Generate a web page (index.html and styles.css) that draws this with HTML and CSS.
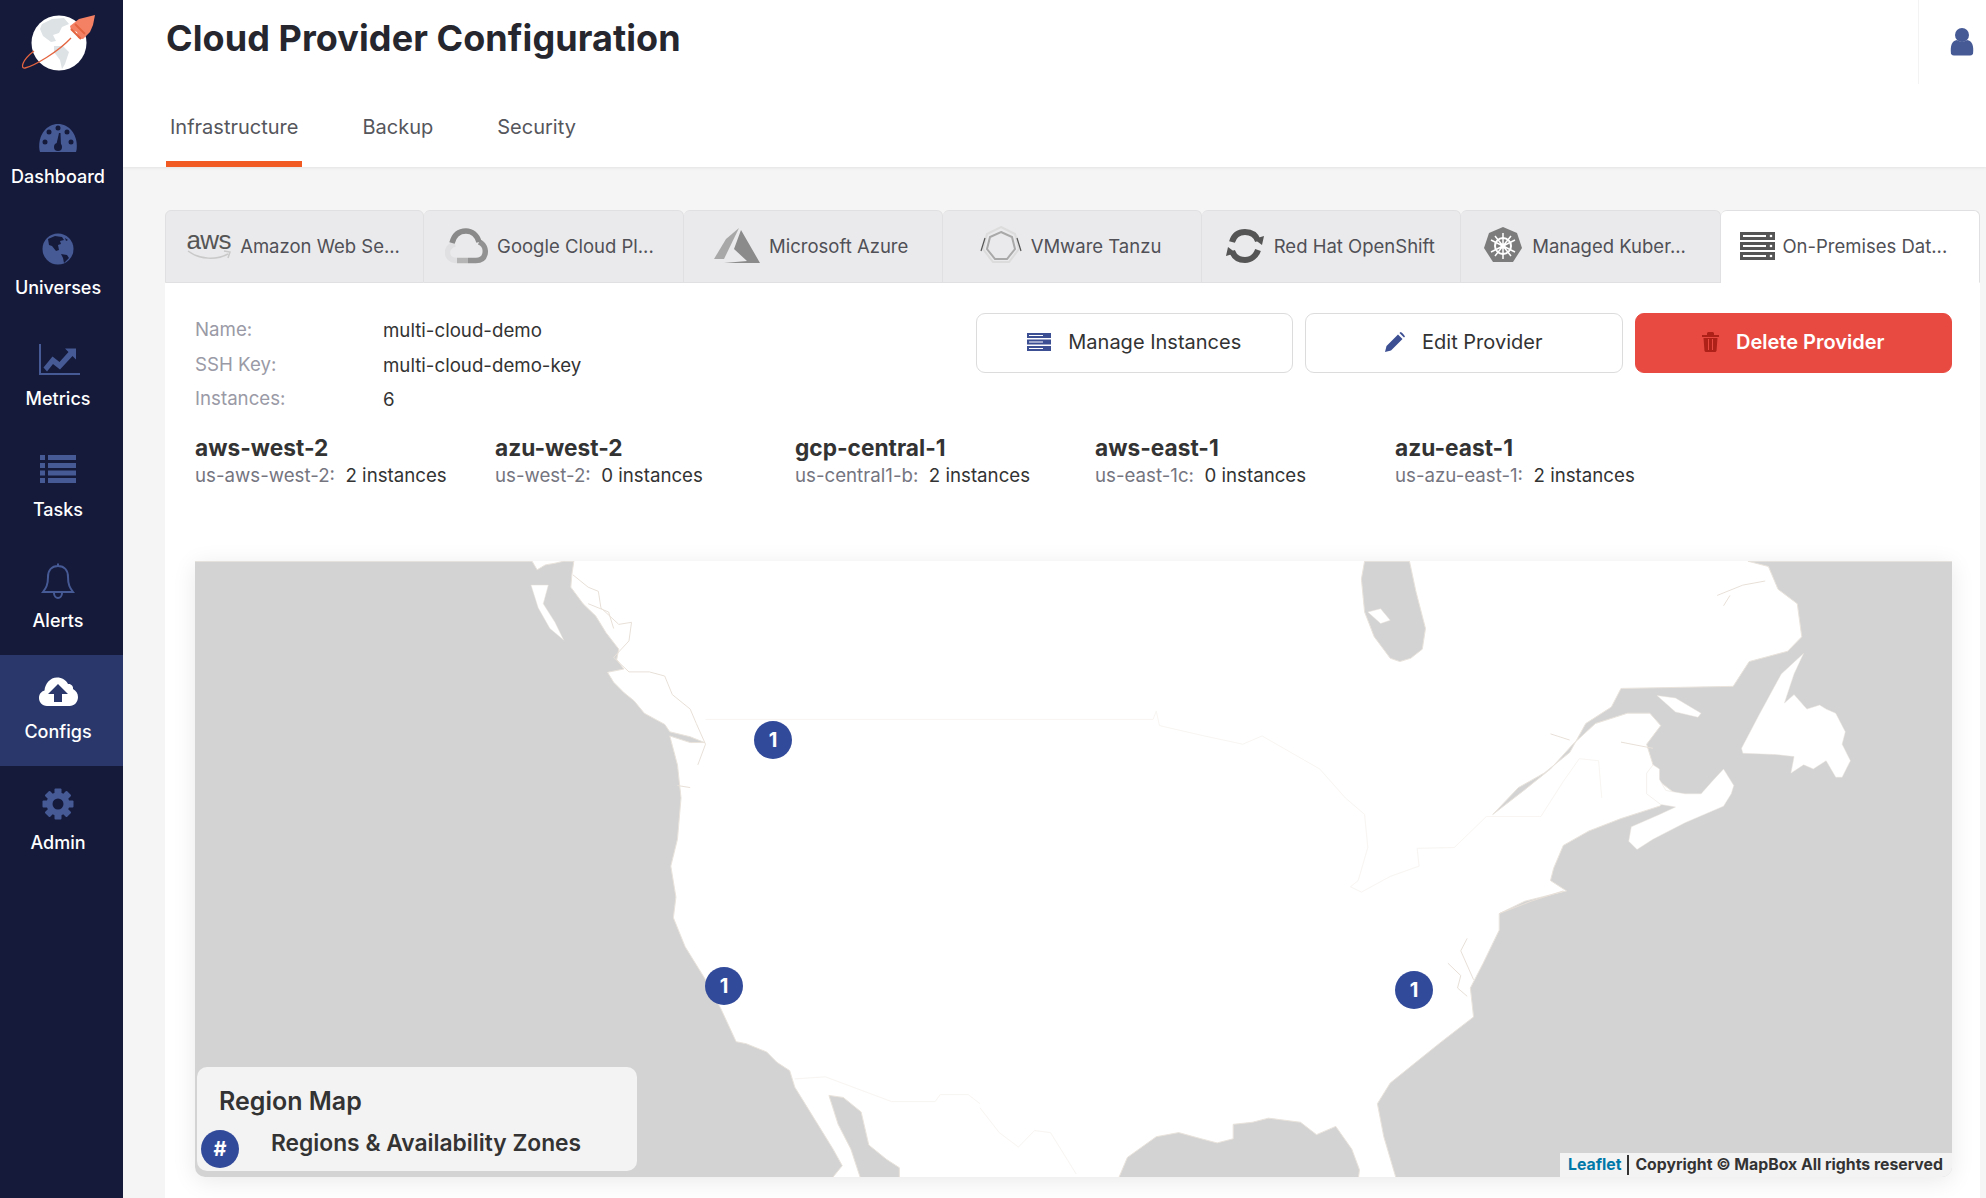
FILE: index.html
```html
<!DOCTYPE html>
<html lang="en">
<head>
    <meta charset="UTF-8">
    <meta name="viewport" content="width=device-width, initial-scale=1.0">
    <title>Cloud Provider Configuration</title>
    <link rel="stylesheet" href="styles.css">
</head>
<body>
    <nav class="sidebar">
        <div class="logo">
            <svg width="123" height="100" viewBox="0 0 123 100">
                <circle cx="59" cy="43" r="27.5" fill="#fff"/>
                <path d="M42 24l10-5 12-1 5 6-7 3-3 6-6 2 3 6-5 1-8-6-3-7z" fill="#dde2e5"/>
                <path d="M54 46l9 0 6 6-4 12-3 5-2-9-6-8z" fill="#dde2e5"/>
                <path d="M71 38C58 52 34 66 25 68c-5 1-3-8 9-17" fill="none" stroke="#e4643f" stroke-width="1.3"/>
                <path d="M70 26l9-7 8-2 8-2-2 10-3 7-7 7-5-1-1-6-6-2z" fill="#f58165"/>
                <path d="M71 29l10 10M75 24l10 10" stroke="#e4643f" stroke-width="2"/>
            </svg>
        </div>
        <a class="nav-item">
            <svg class="nav-icon" viewBox="0 0 44 44">
                <path d="M4 36c-.6-2-.8-3.600-.8-6C3.200 18 11 8 22 8s18.800 10 18.800 22c0 2.400-.2 4-.8 6z"/>
                <g class="cut"><circle cx="9" cy="26" r="2.500"/><circle cx="13" cy="16" r="2.500"/><circle cx="22" cy="12" r="2.500"/><circle cx="31" cy="16" r="2.500"/><circle cx="35" cy="26" r="2.500"/><circle cx="22" cy="31" r="4"/><path d="M20 30l3-13h1.500l.5 13z"/></g>
            </svg>
            <span>Dashboard</span>
        </a>
        <a class="nav-item">
            <svg class="nav-icon" viewBox="0 0 44 44">
                <circle cx="22" cy="22" r="15.500"/>
                <path class="cut" d="M12 12l7-3 7 1 2 3-4 1 1 3-3 1 1 5-3 1-4-5-3-1zM25 27l6 1 2 3-5 5-1-5zM29 11l3 2-2 1z"/>
            </svg>
            <span>Universes</span>
        </a>
        <a class="nav-item">
            <svg class="nav-icon" viewBox="0 0 44 44">
                <path d="M3 6h2v29h39v2H3z"/>
                <path d="M7.500 29.500l9-11 7 5.500 9-10-3.500-3.500h11v11l-3.500-3.500-12.500 13.500-7-5.500-6 7.500z"/>
            </svg>
            <span>Metrics</span>
        </a>
        <a class="nav-item">
            <svg class="nav-icon" viewBox="0 0 44 44">
                <path d="M4 6h5v5H4zM12 6h28v5H12zM4 14h5v5H4zM12 14h28v5H12zM4 21.500h5v5H4zM12 21.500h28v5H12zM4 29h5v5H4zM12 29h28v5H12z"/>
            </svg>
            <span>Tasks</span>
        </a>
        <a class="nav-item">
            <svg class="nav-icon" viewBox="0 0 44 44">
                <path class="line" d="M22 6c-6.500 0-10 4.500-10 11 0 8-2 11-5 15h30c-3-4-5-7-5-15 0-6.500-3.500-11-10-11zM22 3.500v2.500M18 33c0 3 2 5 4 5s4-2 4-5"/>
            </svg>
            <span>Alerts</span>
        </a>
        <a class="nav-item active">
            <svg class="nav-icon" viewBox="0 0 44 44">
                <path d="M11 35C6 35 3 31 3 27c0-3.500 2-6.500 5.500-7.500C9 13 14 6.500 21 6.500c5 0 9 2.500 11 6.500 3-.5 5.500 2 5 5 3 1.500 5 4.500 5 8 0 5-3.500 9-8.500 9z"/>
                <path class="cut" d="M22 13l10 10h-6v8h-8v-8h-6z"/>
            </svg>
            <span>Configs</span>
        </a>
        <a class="nav-item">
            <svg class="nav-icon" viewBox="0 0 44 44">
                <circle cx="22" cy="22" r="11.500"/>
                <g><rect x="18.500" y="6.500" width="7" height="31" rx="1"/><rect x="18.500" y="6.500" width="7" height="31" rx="1" transform="rotate(45 22 22)"/><rect x="18.500" y="6.500" width="7" height="31" rx="1" transform="rotate(90 22 22)"/><rect x="18.500" y="6.500" width="7" height="31" rx="1" transform="rotate(135 22 22)"/></g>
                <circle class="cut" cx="22" cy="22" r="5.500"/>
            </svg>
            <span>Admin</span>
        </a>
    </nav>

    <div class="main">
        <header class="page-header">
            <div class="header-left">
                <h1>Cloud Provider Configuration</h1>
                <div class="page-tabs">
                    <a class="page-tab selected">Infrastructure</a>
                    <a class="page-tab">Backup</a>
                    <a class="page-tab">Security</a>
                </div>
            </div>
            <div class="user-box">
                <svg width="24" height="28" viewBox="0 0 24 28"><circle cx="12" cy="7" r="7"/><path d="M1 26c-1-9 1-13 6-14 3 2 7 2 10 0 5 1 7 5 6 14-1 1-2 1.500-3 1.500H4c-1 0-2-.5-3-1.500z"/></svg>
            </div>
        </header>

        <div class="content">
            <div class="provider-tabs">
                <a class="provider-tab">
                    <span class="aws-logo">aws<svg width="44" height="11" viewBox="0 0 44 11"><path d="M1 1c12 9 29 9 40 3M37 1l6 1-2 6" fill="none" stroke="#c9c9c9" stroke-width="1.500"/></svg></span>
                    Amazon Web Se...
                </a>
                <a class="provider-tab shift-left">
                    <svg width="43" height="36" viewBox="0 0 43 36" fill="none" stroke-width="5.500">
                        <path d="M12 32.500C6 32.500 2.500 29 2.500 24.500 2.500 20 6 17 10 16" stroke="#e0e0e2"/>
                        <path d="M23 32.500H12" stroke="#b5b5b5"/>
                        <path d="M34 14C39 16 41 21 40 26 39 30 36 32.500 31 32.500H23" stroke="#929292"/>
                        <path d="M7 15C9 7 14 3 21 3 27 3 32 7 34 14" stroke="#8a8a8a"/>
                    </svg>
                    Google Cloud Pl...
                </a>
                <a class="provider-tab">
                    <svg width="46" height="36" viewBox="0 0 46 36"><path d="M25 0L12 11 0 31h10z" fill="#a8a8a8"/><path d="M27 2l-7 19 13 12-23 2h36z" fill="#8b8b8b"/></svg>
                    Microsoft Azure
                </a>
                <a class="provider-tab">
                    <svg width="42" height="42" viewBox="0 0 42 42"><path d="M21 2l14 7 4 15-10 13H13L3 24 7 9z" fill="none" stroke="#dcdcdc" stroke-width="2"/><path d="M21 7l11 5 3 12-8 10H15L7 24l3-12z" fill="none" stroke="#a9a9a9" stroke-width="2"/><path d="M5 13L1 26M37 13l4 13" stroke="#555" stroke-width="1.200"/></svg>
                    VMware Tanzu
                </a>
                <a class="provider-tab">
                    <svg width="40" height="38" viewBox="0 0 40 38"><path d="M7 15C9 8 14 5 20 5c6 0 11 3 13 9M33 23c-2 6-7 10-13 10S9 30 7 24" fill="none" stroke="#555" stroke-width="6"/><path d="M29 12l10-3-2 9zM11 26L1 29l2-9z" fill="#555"/></svg>
                    Red Hat OpenShift
                </a>
                <a class="provider-tab shift-far">
                    <svg width="40" height="40" viewBox="0 0 40 40"><path d="M20 1l14 6 5 15-9 14H10L1 22 6 7z" fill="#7c7c7c"/><circle cx="20" cy="20" r="8" fill="none" stroke="#fff" stroke-width="2"/><path d="M20 7v26M8 14l24 12M32 14L8 26M12 30l16-20M28 30L12 10" stroke="#fff" stroke-width="1.500"/><circle cx="20" cy="20" r="2.500" fill="#fff"/></svg>
                    Managed Kuber...
                </a>
                <a class="provider-tab active shift-far">
                    <svg width="35" height="28" viewBox="0 0 35 28"><path d="M0 0h35v8H0zM0 10h35v8H0zM0 20h35v8H0z" fill="#555"/><path d="M3 3h23v2H3zM3 13h23v2H3zM3 23h23v2H3z" fill="#fff"/><circle cx="31" cy="4" r="1.300" fill="#fff"/><circle cx="31" cy="14" r="1.300" fill="#fff"/><circle cx="31" cy="24" r="1.300" fill="#fff"/></svg>
                    On-Premises Dat...
                </a>
            </div>

            <div class="panel">
                <div class="summary">
                    <div class="info">
                        <div class="info-row"><span class="info-label">Name:</span><span class="info-value">multi-cloud-demo</span></div>
                        <div class="info-row"><span class="info-label">SSH Key:</span><span class="info-value">multi-cloud-demo-key</span></div>
                        <div class="info-row"><span class="info-label">Instances:</span><span class="info-value">6</span></div>
                    </div>
                    <div class="actions">
                        <button class="btn">
                            <svg width="24" height="18" viewBox="0 0 24 18"><path d="M0 0h24v5H0zM0 6.500h24v5H0zM0 13h24v5H0z" fill="#3d4f93"/><path d="M2 2h14v1H2zM2 8.500h14v1H2zM2 15h14v1H2z" fill="#fff"/></svg>
                            Manage Instances
                        </button>
                        <button class="btn">
                            <svg width="20" height="20" viewBox="0 0 20 20"><path d="M0 20l1.500-6L13 2.500l4.500 4.500L6 18.500zM14.500 1l1-1c1 0 4 3 4.500 4.500l-1 1z" fill="#3d4f93"/></svg>
                            Edit Provider
                        </button>
                        <button class="btn btn-danger">
                            <svg width="17" height="20" viewBox="0 0 17 20"><path d="M0 3h5V1l1-1h5l1 1v2h5v2H0zM1.500 6h14l-1 13-1 1h-10l-1-1zM6 7v11h1V7zM10 7v11h1V7z" fill="#ad2118" fill-rule="evenodd"/></svg>
                            Delete Provider
                        </button>
                    </div>
                </div>

                <div class="regions">
                    <div class="region"><div class="region-name">aws-west-2</div><div class="region-zone">us-aws-west-2:<b>2 instances</b></div></div>
                    <div class="region"><div class="region-name">azu-west-2</div><div class="region-zone">us-west-2:<b>0 instances</b></div></div>
                    <div class="region"><div class="region-name">gcp-central-1</div><div class="region-zone">us-central1-b:<b>2 instances</b></div></div>
                    <div class="region"><div class="region-name">aws-east-1</div><div class="region-zone">us-east-1c:<b>0 instances</b></div></div>
                    <div class="region"><div class="region-name">azu-east-1</div><div class="region-zone">us-azu-east-1:<b>2 instances</b></div></div>
                </div>

                <div class="map">
                    <svg class="map-art" viewBox="195 561 1757 616">
                        <!-- west coast -->
                        <g transform="translate(180 550) scale(.5102 .4132)">
                            <path class="sea" d="M0 27L690 27 700 48 716 36 735 32 752 27 772 27 768 60 766 90 790 130 815 160 835 200 860 240 856 265 870 288 838 296 850 320 870 345 890 365 910 395 935 412 950 422 960 440 1000 452 1028 466 1000 466 960 450 975 520 982 600 975 700 962 765 972 840 967 890 990 960 1030 1040 1060 1110 1090 1190 1110 1195 1150 1215 1170 1240 1195 1260 1205 1300 1220 1330 1250 1390 1280 1450 1298 1490 1275 1525 0 1525Z"/>
                            <path class="land" d="M688 85L722 85 712 130 735 175 752 218 725 190 702 140Z"/>
                            <path class="sea" d="M1272 1320L1300 1325 1335 1360 1350 1440 1385 1475 1410 1495 1410 1525 1335 1525 1315 1450 1290 1390Z"/>
                            <path class="coast" d="M770 60L800 90 820 100 825 140 860 180 885 175 880 220 850 260 880 295 920 295 950 305 965 350 1000 385 1012 420 1030 470 1015 520M800 130L840 150 850 190M975 570L1000 575"/>
                            <path class="border" d="M1030 410H1568M1205 1280L1265 1275 1395 1335 1480 1335 1490 1318 1545 1318 1568 1340"/>
                        </g>
                        <!-- east coast and gulfs -->
                        <g transform="translate(980 550) scale(.641 .4132)">
                            <path class="sea" d="M600 27L670 27 680 100 695 190 690 240 672 262 655 270 640 262 615 210 600 150 595 70Z"/>
                            <path class="land" d="M605 150L625 142 640 170 625 178Z"/>
                            <path class="sea" d="M1198 27L1230 40 1245 95 1275 130 1282 210 1260 245 1200 270 1175 330 1000 335 985 380 945 420 920 490 880 540 840 575 800 640 850 580 890 530 925 470 960 420 1010 395 1045 395 1062 425 1040 470 1050 520 1060 560 1085 590 1060 620 1000 650 950 680 910 715 895 770 890 800 915 825 850 850 810 880 810 920 785 1000 765 1060 770 1130 720 1190 680 1240 640 1290 620 1340 630 1420 650 1525 1600 1525 1600 27Z"/>
                            <path class="land" d="M1285 250L1250 300 1215 400 1188 480 1190 492 1240 495 1270 500 1265 540 1285 520 1300 530 1320 510 1335 550 1345 550 1358 510 1345 470 1350 440 1335 395 1320 385 1310 375 1290 385 1270 350 1255 370 1270 300ZM1056 352L1085 358 1125 395 1120 405 1085 392ZM1025 725L1012 705 1016 670 1060 640 1085 622 1062 616 1040 590 1040 540 1050 520 1060 530 1060 555 1070 582 1100 590 1125 590 1142 560 1160 530 1176 570 1172 590 1160 620 1100 660 1050 700Z"/>
                            <path class="sea" d="M215 1525L230 1470 275 1420 310 1410 345 1425 370 1435 395 1425 395 1390 425 1385 450 1375 500 1385 525 1415 555 1395 580 1450 592 1500 590 1525Z"/>
                            <path class="coast" d="M1150 110L1190 85 1225 75M1160 135L1170 110M890 445L920 460M1000 465L1050 480M730 1000L750 1030 745 1060 760 1080M760 940L750 970 770 1040M810 880L860 850 910 825"/>
                            <path class="border" d="M0 410H270L275 390 280 425 350 450 410 470 440 450 530 530 570 600 600 640 605 720 590 800 578 815 595 828 640 790 685 765 682 722 740 720 790 645 875 645 910 560 935 505 965 510 970 600M0 1350L30 1410 60 1445 85 1405 110 1410 150 1510"/>
                        </g>
                    </svg>
                    <span class="pin pin-north">1</span>
                    <span class="pin pin-south">1</span>
                    <span class="pin pin-east">1</span>
                    <div class="legend">
                        <h4>Region Map</h4>
                        <p>Regions &amp; Availability Zones</p>
                        <span class="pin pin-legend">#</span>
                    </div>
                    <div class="attribution"><a>Leaflet</a><i></i>Copyright © MapBox All rights reserved</div>
                </div>
            </div>
        </div>
    </div>
</body>
</html>
```

FILE: styles.css
```css
* {
    box-sizing: border-box;
}

html, body {
    height: 100%;
}

body {
    margin: 0;
    display: flex;
    overflow: hidden;
    font-family: Inter, "Liberation Sans", sans-serif;
    background-color: #f5f5f5;
    color: #333;
}

/* sidebar */
.sidebar {
    width: 123px;
    flex-shrink: 0;
    background: #151a3b;
}

.logo {
    height: 100px;
}

.logo svg {
    display: block;
}

.nav-item {
    height: 111px;
    padding: 16px 7px 0 0;
    display: flex;
    flex-direction: column;
    align-items: center;
    color: #fff;
    font-size: 18px;
    font-weight: 500;
    line-height: 32px;
}

.nav-item span {
    margin-top: 1px;
}

.nav-item.active {
    background: #29376b;
}

.nav-icon {
    width: 44px;
    height: 44px;
    fill: #465a96;
    flex-shrink: 0;
}

.nav-icon .cut {
    fill: #151a3b;
}

.nav-icon .line {
    fill: none;
    stroke: #465a96;
    stroke-width: 2;
}

.nav-item.active .nav-icon {
    fill: #fff;
}

.nav-item.active .nav-icon .cut {
    fill: #29376b;
}

/* header */
.main {
    flex: 1;
    min-width: 0;
    display: flex;
    flex-direction: column;
}

.page-header {
    height: 167px;
    flex-shrink: 0;
    display: flex;
    justify-content: space-between;
    align-items: flex-start;
    padding-left: 43px;
    background: #fff;
    box-shadow: 0 1px 3px rgba(0,0,0,0.08);
}

h1 {
    margin: 0;
    height: 100px;
    padding-top: 15px;
    font-size: 36px;
    line-height: 46px;
    font-weight: 700;
    letter-spacing: 0.08px;
    color: #26272e;
}

.page-tabs {
    display: flex;
    height: 67px;
}

.page-tab {
    padding: 11px 4px 0;
    margin-right: 56px;
    font-size: 20px;
    line-height: 32px;
    color: #55565c;
}

.page-tab.selected {
    border-bottom: 6px solid #f25a24;
}

.user-box {
    width: 68px;
    height: 84px;
    display: flex;
    align-items: flex-start;
    justify-content: flex-end;
    padding: 28px 12px 0 0;
    border-left: 1px solid #f3f3f3;
}

.user-box svg {
    fill: #465a96;
}

/* provider tabs */
.content {
    flex: 1;
    padding: 43px 6px 0 42px;
}

.provider-tabs {
    display: grid;
    grid-template-columns: repeat(7, 1fr);
    height: 73px;
}

.provider-tab {
    display: flex;
    align-items: center;
    justify-content: center;
    gap: 9px;
    min-width: 0;
    padding: 0 3px 2px 0;
    white-space: nowrap;
    font-size: 18.5px;
    color: #505056;
    background: #eaeaec;
    border: 1px solid #e0e0e2;
    border-left-width: 0;
    border-radius: 6px 6px 0 0;
}

.provider-tab:first-child {
    border-left-width: 1px;
}

.provider-tab.shift-left {
    padding-right: 8px;
}

.provider-tab.shift-far {
    padding-right: 12px;
}

.provider-tab.active {
    gap: 7px;
    background: #fff;
    border-bottom-color: #fff;
}

.aws-logo {
    display: flex;
    flex-direction: column;
    align-items: center;
    font-family: "Liberation Sans", sans-serif;
    font-size: 26px;
    line-height: 20px;
    color: #555;
    letter-spacing: -0.5px;
}

.aws-logo svg {
    display: block;
}

/* panel */
.panel {
    height: 915px;
    padding: 30px 28px 0 30px;
    background: #fff;
}

.summary {
    display: flex;
    justify-content: space-between;
    align-items: flex-start;
}

.info-row {
    display: flex;
    height: 34.5px;
    line-height: 34px;
    font-size: 18.7px;
}

.info-label {
    width: 188px;
    color: #9a9aa6;
}

.info-value {
    padding-top: 1px;
}

.actions {
    display: flex;
    gap: 12px;
}

.btn {
    width: 317.5px;
    height: 60px;
    display: flex;
    align-items: center;
    justify-content: center;
    gap: 17px;
    padding: 0 0 2px;
    background: #fff;
    border: 1.5px solid #dcdcdc;
    border-radius: 9px;
    font-family: inherit;
    font-size: 20px;
    color: #333;
}

.btn-danger {
    background: #e84a41;
    border-color: #e84a41;
    color: #fff;
    font-weight: 600;
}

.regions {
    display: flex;
    margin-top: 17px;
}

.region {
    width: 300px;
}

.region-name {
    font-size: 22.7px;
    line-height: 28px;
    font-weight: 700;
}

.region-zone {
    margin-top: 1px;
    font-size: 18.7px;
    line-height: 26px;
    color: #75757f;
}

.region-zone b {
    margin-left: 10.5px;
    font-weight: 400;
    color: #333;
}

/* map */
.map {
    position: relative;
    height: 616px;
    margin-top: 72px;
    background: #fff;
    box-shadow: 0 4px 24px rgba(0,0,0,0.09);
    border-radius: 0 0 10px 10px;
    overflow: hidden;
}

.map-art {
    position: absolute;
    inset: 0;
    width: 100%;
    height: 100%;
    display: block;
}

.sea {
    fill: #d3d3d3;
    stroke: #e9e3dc;
    stroke-width: 1;
    vector-effect: non-scaling-stroke;
}

.land {
    fill: #fff;
    stroke: #e9e3dc;
    stroke-width: 0.5;
    vector-effect: non-scaling-stroke;
}

.coast {
    fill: none;
    stroke: #e8e0d8;
    stroke-width: 1;
    vector-effect: non-scaling-stroke;
}

.border {
    fill: none;
    stroke: #f8f5f2;
    stroke-width: 1;
    vector-effect: non-scaling-stroke;
}

.pin {
    position: absolute;
    width: 38px;
    height: 38px;
    border-radius: 50%;
    background: #324a9a;
    color: #fff;
    font-size: 20px;
    font-weight: 700;
    line-height: 38px;
    text-align: center;
}

.pin-north { left: 559px; top: 160px; }
.pin-south { left: 510px; top: 406px; }
.pin-east { left: 1200px; top: 410px; }
.pin-legend { left: 4px; top: 63px; }

.legend {
    position: absolute;
    left: 2px;
    bottom: 6px;
    width: 440px;
    height: 104px;
    padding: 17px 0 0 22px;
    background: #f3f3f3;
    border-radius: 10px;
}

.legend h4 {
    margin: 0;
    font-size: 25px;
    line-height: 34px;
    font-weight: 600;
}

.legend p {
    margin: 9px 0 0 52px;
    font-size: 22.8px;
    line-height: 32px;
    font-weight: 600;
}

.attribution {
    position: absolute;
    right: 0;
    bottom: 0;
    width: 392px;
    height: 24px;
    display: flex;
    align-items: center;
    padding-left: 8px;
    background: #f3f3f3;
    font-size: 15.8px;
    font-weight: 700;
    white-space: nowrap;
}

.attribution a {
    color: #0078a8;
}

.attribution i {
    width: 2px;
    height: 20px;
    flex-shrink: 0;
    margin: 0 6px;
    background: #333;
}
```
